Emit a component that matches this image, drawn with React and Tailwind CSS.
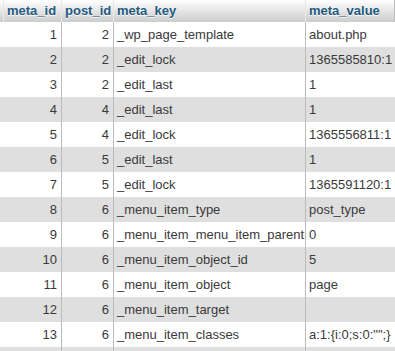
import React from "react";

const rows = [
  [1, 2, "_wp_page_template", "about.php"],
  [2, 2, "_edit_lock", "1365585810:1"],
  [3, 2, "_edit_last", "1"],
  [4, 4, "_edit_last", "1"],
  [5, 4, "_edit_lock", "1365556811:1"],
  [6, 5, "_edit_last", "1"],
  [7, 5, "_edit_lock", "1365591120:1"],
  [8, 6, "_menu_item_type", "post_type"],
  [9, 6, "_menu_item_menu_item_parent", "0"],
  [10, 6, "_menu_item_object_id", "5"],
  [11, 6, "_menu_item_object", "page"],
  [12, 6, "_menu_item_target", ""],
  [13, 6, "_menu_item_classes", 'a:1:{i:0;s:0:"";}'],
  ["", "", "", ""],
];

export default function App() {
  return (
    <div
      className="w-[395px] h-[351px] overflow-hidden bg-white text-[13px] text-[#3a3a3a]"
      style={{ fontFamily: '"Liberation Sans", Arial, sans-serif' }}
    >
      <div className="flex h-[22px] bg-gradient-to-b from-white to-[#cccccc] font-bold text-[#235a81] [text-shadow:0_1px_0_#fff]">
        <div className="w-[4px] border-r border-[#e8e8e8]" />
        <div className="w-[58px] border-r border-[#e8e8e8] flex items-center px-[3px]">meta_id</div>
        <div className="w-[52px] border-r border-[#e8e8e8] flex items-center px-[3px]">post_id</div>
        <div className="w-[192px] border-r border-[#e8e8e8] flex items-center px-[3px]">meta_key</div>
        <div className="flex-1 border-r border-[#bbbbbb] flex items-center px-[3px]">meta_value</div>
      </div>
      {rows.map((r, i) => (
        <div
          key={i}
          className={`flex h-[25px] ${i % 2 === 1 ? "bg-[#dfdfdf]" : "bg-white"}`}
        >
          <div className="w-[4px]" />
          <div className="w-[58px] border-r border-[#bbbbbb] flex items-center justify-end pr-[4px]">{r[0]}</div>
          <div className="w-[52px] border-r border-[#bbbbbb] flex items-center justify-end pr-[4px]">{r[1]}</div>
          <div className="w-[192px] border-r border-[#bbbbbb] flex items-center pl-[3px] whitespace-nowrap">{r[2]}</div>
          <div className="flex-1 flex items-center pl-[3px] whitespace-nowrap">{r[3]}</div>
        </div>
      ))}
    </div>
  );
}
